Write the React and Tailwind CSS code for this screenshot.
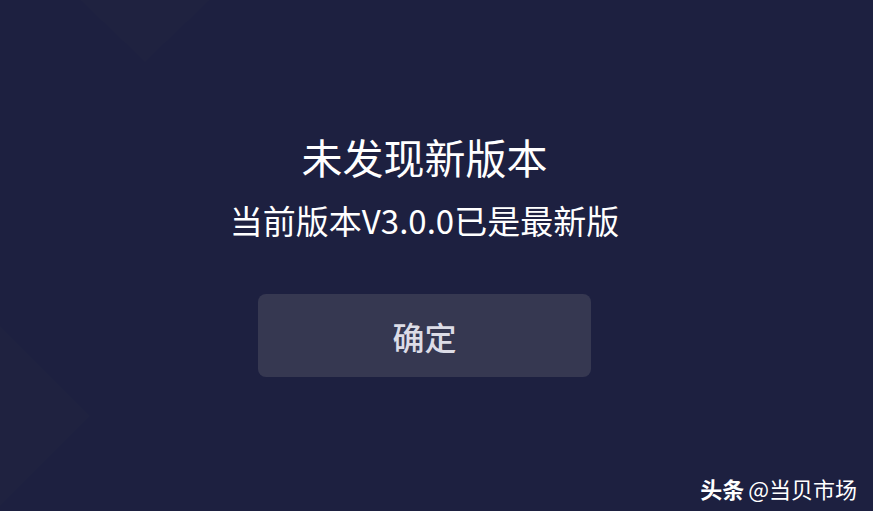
export default function App() {
  return (
    <div
      className="relative h-[511px] w-full overflow-hidden bg-[#1d2040] text-white"
      style={{ fontFamily: '"Noto Sans CJK SC", "Noto Sans", sans-serif' }}
    >
      {/* faint diamond decoration */}
      <svg className="pointer-events-none absolute inset-0 h-full w-full" viewBox="0 0 873 511" preserveAspectRatio="none">
        <polygon points="80,0 145,62 210,0" fill="#1f2240" />
        <polygon points="0,326 90,416 0,506" fill="#1f2240" />
      </svg>

      <div className="relative flex flex-col items-center pr-[24px] pt-[136px]">
        <h1 className="text-[41px] font-normal leading-none text-white">未发现新版本</h1>
        <p className="mt-[27px] text-[33px] font-normal leading-none text-white">当前版本V3.0.0已是最新版</p>
        <button
          type="button"
          className="mt-[57px] flex h-[83px] w-[333px] items-center justify-center rounded-lg bg-[#363851] text-[32px] font-medium text-[#dcdce6]"
        >
          确定
        </button>
      </div>

      <div className="absolute bottom-[12px] right-[16px] flex items-center gap-1 text-[22px] leading-none text-white">
        <span className="font-bold">头条</span>
        <span>@当贝市场</span>
      </div>
    </div>
  );
}
